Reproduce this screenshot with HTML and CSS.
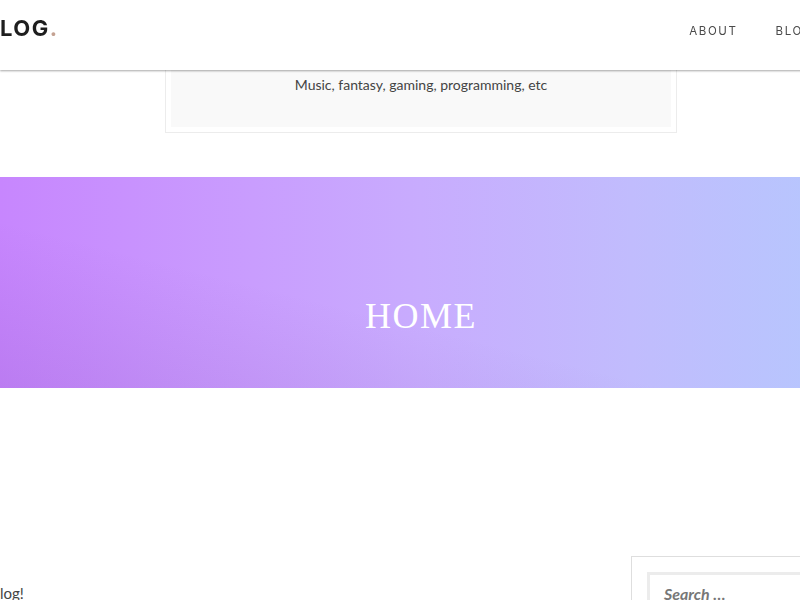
FILE: index.html
```html
<!DOCTYPE html>
<html>
<head>
<meta charset="utf-8">
<link rel="stylesheet" href="styles.css">
</head>
<body>
<header class="site-header">
  <div class="logo">LOG<span class="dot">.</span></div>
  <nav class="nav">
    <a class="nav-item">ABOUT</a>
    <a class="nav-item">BLOG</a>
  </nav>
</header>
<div class="page">
  <section class="intro">
    <div class="intro-inner">Music, fantasy, gaming, programming, etc</div>
  </section>
  <section class="hero">
    <h1 class="hero-title">HOME</h1>
  </section>
  <div class="content-row">
    <main class="main-col">
      <p class="welcome">log!</p>
    </main>
    <aside class="sidebar">
      <div class="search-box">
        <div class="search-field">Search …</div>
      </div>
    </aside>
  </div>
</div>
</body>
</html>
```
FILE: styles.css
```css
html, body {
  margin: 0;
  padding: 0;
  overflow: hidden;
  background: #fff;
  font-family: "Lato", "Liberation Sans", sans-serif;
  color: #444;
}
.site-header {
  position: fixed;
  top: 0;
  left: 0;
  width: 900px;
  height: 70px;
  background: #fff;
  box-shadow: 0 1px 2px rgba(0,0,0,0.35);
  display: flex;
  align-items: center;
  z-index: 10;
}
.logo {
  font-family: "Inter", "Liberation Sans", sans-serif;
  font-weight: 700;
  font-size: 22px;
  letter-spacing: 1.5px;
  color: #1e1e1e;
  margin-top: -14px;
}
.logo .dot { color: #c4a292; }
.nav {
  margin-left: auto;
  display: flex;
  gap: 38px;
  padding-right: 87px;
  margin-top: -8px;
}
.nav-item {
  font-family: "Inter", "Liberation Sans", sans-serif;
  font-size: 11.5px;
  letter-spacing: 1.6px;
  color: #4a4a4a;
}
.page {
  width: 842px;
  padding-top: 20px;
}
.intro {
  width: 500px;
  margin: 0 auto;
  border: 1px solid #ececec;
  padding: 5px;
}
.intro-inner {
  background: #f9f9f9;
  text-align: center;
  font-size: 14px;
  line-height: 20px;
  padding: 49px 0 32px;
  color: #444;
}
.hero {
  margin-top: 44px;
  height: 211px;
  box-sizing: border-box;
  padding-top: 118px;
  background:
    linear-gradient(to top right, rgba(80,30,130,0.10), rgba(80,30,130,0) 40%),
    linear-gradient(to right, #c786fe 0%, #c99dfe 30%, #c8acfe 50%, #c1bcfd 75%, #b6c7fe 100%);
}
.hero-title {
  margin: 0;
  text-align: center;
  font-family: "Liberation Serif", serif;
  font-weight: 400;
  font-size: 36px;
  line-height: 43px;
  letter-spacing: 1.5px;
  color: #fff;
}
.content-row {
  display: flex;
  margin-top: 168px;
}
.main-col {
  width: 631px;
}
.welcome {
  margin: 27px 0 0;
  font-size: 15px;
  line-height: 20px;
  color: #444;
}
.sidebar {
  flex: 1;
}
.search-box {
  border: 1px solid #dedede;
  border-right: none;
  padding: 15px 0 15px 15px;
}
.search-field {
  border: 3px solid #ececec;
  border-right: none;
  padding: 9px 14px 10px;
  font-style: italic;
  font-weight: 700;
  font-size: 16px;
  line-height: 20px;
  color: #777;
}
```
